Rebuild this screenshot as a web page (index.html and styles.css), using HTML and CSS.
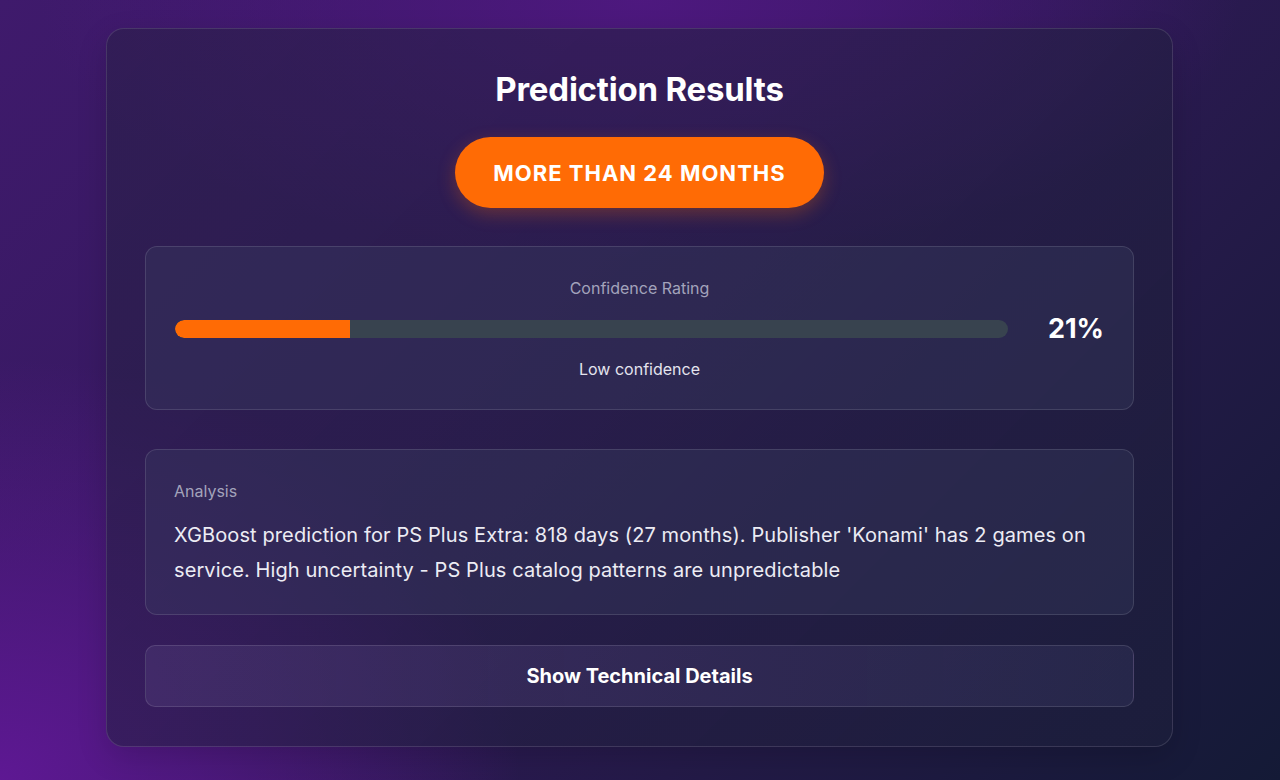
FILE: index.html
```html
<!DOCTYPE html>
<html>
<head>
<meta charset="utf-8">
<link rel="stylesheet" href="styles.css">
</head>
<body>
<div class="page">
  <section class="card">
    <h1 class="title">Prediction Results</h1>
    <div class="pill">MORE THAN 24 MONTHS</div>
    <div class="box confidence">
      <div class="label">Confidence Rating</div>
      <div class="bar-row">
        <div class="track"><div class="fill" style="width:21%"></div></div>
        <div class="pct">21%</div>
      </div>
      <div class="level">Low confidence</div>
    </div>
    <div class="box analysis">
      <div class="label">Analysis</div>
      <p class="text">XGBoost prediction for PS Plus Extra: 818 days (27 months). Publisher 'Konami' has 2 games on service. High uncertainty - PS Plus catalog patterns are unpredictable</p>
    </div>
    <button class="details">Show Technical Details</button>
  </section>
</div>
</body>
</html>
```

FILE: styles.css
```css
* { box-sizing: border-box; }
html, body { margin: 0; padding: 0; }
body {
  width: 1280px;
  height: 780px;
  overflow: hidden;
  font-family: Inter, "Noto Sans", sans-serif;
  color: #fff;
  background:
    radial-gradient(ellipse 520px 420px at 0% 100%, rgba(96, 24, 150, 0.95), rgba(96, 24, 150, 0) 100%),
    radial-gradient(ellipse 600px 260px at 50% 0%, rgba(80, 24, 130, 0.9), rgba(80, 24, 130, 0) 100%),
    linear-gradient(135deg, #3f1a6c 0%, #34195e 40%, #241a48 70%, #141a36 100%);
}
.page {
  padding: 28px 107px 0 106px;
}
.card {
  border-radius: 18px;
  border: 1px solid rgba(255, 255, 255, 0.12);
  background: linear-gradient(135deg, rgba(40, 32, 70, 0.55), rgba(30, 32, 60, 0.6));
  padding: 40px 38px 39px;
  display: flex;
  flex-direction: column;
  align-items: stretch;
  box-shadow: 0 10px 30px rgba(0, 0, 0, 0.15);
}
.title {
  margin: 0;
  text-align: center;
  font-size: 33px;
  line-height: 40px;
  font-weight: 700;
  letter-spacing: -0.2px;
}
.pill {
  align-self: center;
  margin-top: 28px;
  height: 71px;
  padding: 0 38px;
  border-radius: 36px;
  background: #ff6b05;
  color: #fff;
  font-size: 22px;
  font-weight: 700;
  letter-spacing: 1px;
  display: flex;
  align-items: center;
  box-shadow: 0 6px 18px rgba(255, 107, 5, 0.28);
}
.box {
  border-radius: 12px;
  border: 1px solid rgba(255, 255, 255, 0.12);
  background: rgba(60, 66, 100, 0.32);
}
.confidence {
  margin-top: 38px;
  height: 164px;
  padding: 30px 29px 0;
  text-align: center;
}
.label {
  font-size: 16px;
  line-height: 22px;
  color: #a3a3bb;
}
.bar-row {
  display: flex;
  align-items: center;
  margin-top: 14px;
}
.track {
  flex: 1;
  height: 18px;
  border-radius: 9px;
  background: #38434f;
  overflow: hidden;
}
.fill {
  height: 100%;
  background: #ff6b05;
  border-radius: 9px 0 0 9px;
}
.pct {
  width: 96px;
  text-align: right;
  font-size: 27px;
  line-height: 32px;
  font-weight: 700;
}
.level {
  margin-top: 13px;
  font-size: 16px;
  line-height: 22px;
  color: #e4e4ee;
}
.analysis {
  margin-top: 39px;
  height: 166px;
  padding: 30px 28px 0;
}
.analysis .label { text-align: left; }
.text {
  margin: 16px 0 0;
  font-size: 20px;
  line-height: 35px;
  letter-spacing: 0.1px;
  color: #ececf4;
}
.details {
  margin-top: 30px;
  height: 62px;
  border-radius: 10px;
  border: 1px solid rgba(255, 255, 255, 0.12);
  background: linear-gradient(90deg, rgba(80, 60, 120, 0.45), rgba(55, 55, 95, 0.4));
  color: #fff;
  font-family: Inter, "Noto Sans", sans-serif;
  font-size: 20px;
  font-weight: 700;
  cursor: pointer;
}
```
